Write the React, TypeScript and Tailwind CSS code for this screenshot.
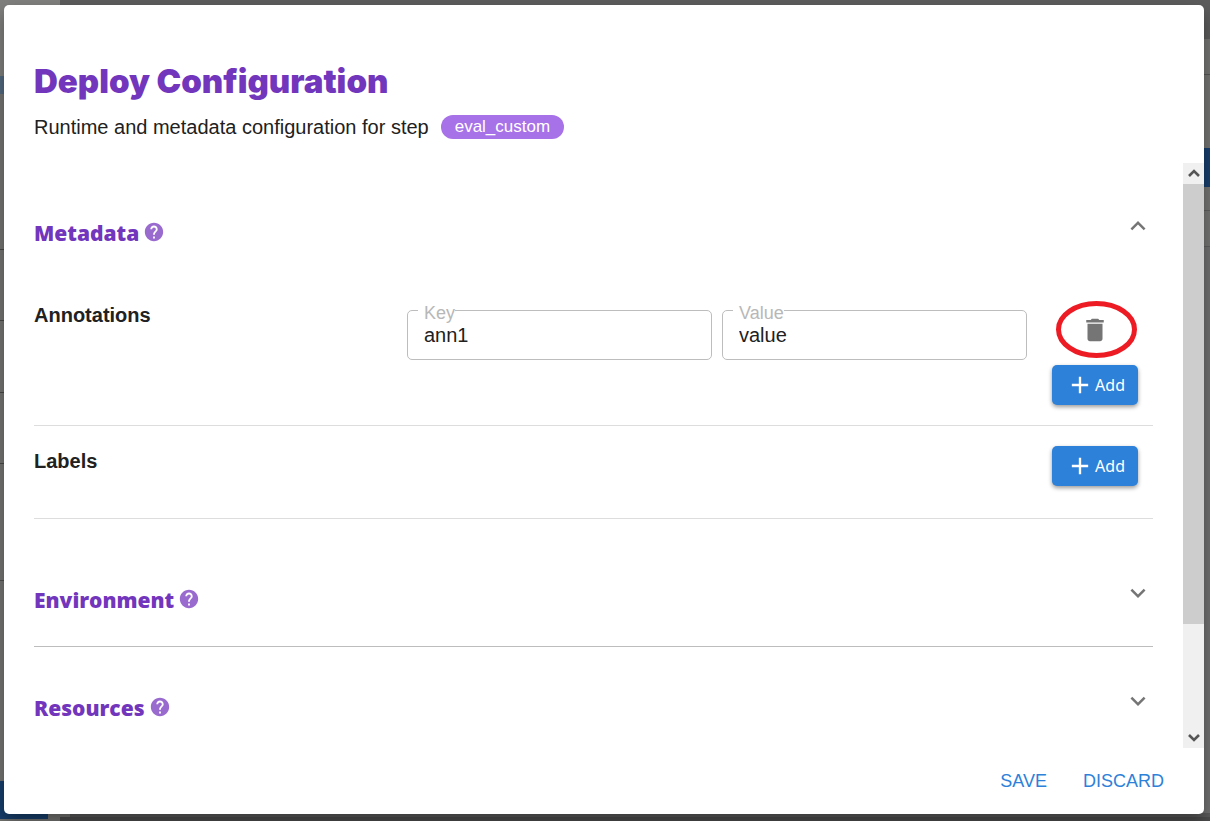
import React from 'react';
import { MdAdd, MdDelete, MdExpandLess, MdExpandMore, MdHelp } from 'react-icons/md';

type SectionHeaderProps = {
    title: string;
    open?: boolean;
};

const SectionHeader: React.FC<SectionHeaderProps> = ({ title, open = false }) => {
    const Chevron = open ? MdExpandLess : MdExpandMore;
    return (
        <div className="flex items-start justify-between">
            <div className="flex items-start gap-1">
                <h2 className="pt-2 font-['Open_Sans',sans-serif] text-[21px] leading-7 font-extrabold text-[#7236bd]">
                    {title}
                </h2>
                <button type="button" aria-label={`${title} help`} className="pt-2.5 text-[#9a6bcf]">
                    <MdHelp className="h-[22px] w-[22px]" />
                </button>
            </div>
            <button type="button" aria-label={`Toggle ${title}`} aria-expanded={open} className="text-[#757575]">
                <Chevron className="h-[30px] w-[30px]" />
            </button>
        </div>
    );
};

type TextFieldProps = {
    id: string;
    label: string;
    value: string;
};

const TextField: React.FC<TextFieldProps> = ({ id, label, value }) => (
    <div className="relative flex-1">
        <input
            id={id}
            type="text"
            defaultValue={value}
            className="h-[50px] w-full rounded-[5px] border border-[#bdbdbd] px-4 text-xl text-[#212121] outline-none"
        />
        <label htmlFor={id} className="absolute -top-[7px] left-[11px] bg-white pl-1.5 text-lg leading-5 text-[#b8b8b8]">
            {label}
        </label>
    </div>
);

const AddButton: React.FC = () => (
    <button
        type="button"
        className="flex h-10 w-[86px] items-center justify-end gap-px rounded-[5px] bg-[#2d81d9] pr-[13px] pb-px font-['Noto_Sans',sans-serif] text-base text-white shadow-[0_2px_4px_rgba(0,0,0,0.4)]"
    >
        <MdAdd className="h-7 w-7" />
        Add
    </button>
);

// Page that stays dimmed behind the dialog
const Backdrop: React.FC = () => (
    <div aria-hidden="true" className="flex h-full bg-[#747472]">
        <div className="flex w-[60px] flex-col">
            <div className="h-[76px] bg-[#7f7f7e]" />
            <div className="h-[18px] bg-[#52697f]" />
            <div className="h-[156px] border-b border-[#484848]" />
            <div className="h-[71px] border-b border-[#484848]" />
            <div className="h-[72px] border-b border-[#484848]" />
            <div className="h-[71px] border-b border-[#484848]" />
            <div className="h-[117px] border-b border-[#505050]" />
            <div className="flex-1" />
            <div className="mb-0.5 h-[38px] w-12 bg-[#173f6c]" />
        </div>
        <div className="flex flex-1 flex-col">
            <div className="h-[39px] bg-[#5c5c5c]" />
            <div className="h-9 border-b border-[#555555]" />
            <div className="h-[73px]" />
            <div className="h-[39px] bg-[#173f6c]" />
            <div className="h-6 border-b border-[#5f5f5f]" />
            <div className="h-9 border-b border-[#5f5f5f]" />
            <div className="flex-1 bg-[#707070]" />
            <div className="ml-2.5 h-1 bg-[#5a5a5a]" />
            <div className="h-1 bg-[#4c4c4c]" />
        </div>
    </div>
);

const ScrollBar: React.FC = () => (
    <div className="flex w-[21px] shrink-0 flex-col bg-[#f0f0f0] text-[#555555]">
        <button type="button" aria-label="Scroll up" className="flex h-[21px] items-center justify-center">
            <svg viewBox="0 0 12 9" className="h-[9px] w-3" fill="none" stroke="currentColor" strokeWidth="2.6">
                <path d="M1 7 6 2l5 5" />
            </svg>
        </button>
        <div className="flex flex-1 flex-col">
            <div className="h-[81%] bg-[#cdcdcd]" />
        </div>
        <button type="button" aria-label="Scroll down" className="flex h-[21px] items-center justify-center">
            <svg viewBox="0 0 12 9" className="h-[9px] w-3" fill="none" stroke="currentColor" strokeWidth="2.6">
                <path d="M1 2l5 5 5-5" />
            </svg>
        </button>
    </div>
);

const App: React.FC = () => {
    return (
        <div className="relative h-screen overflow-hidden font-['Liberation_Sans',Arial,sans-serif]">
            <Backdrop />
            <div className="absolute inset-0 pt-[5px] pr-1.5 pb-[7px] pl-1">
                <div
                    role="dialog"
                    aria-labelledby="dialog-title"
                    className="flex h-full flex-col rounded-[5px] bg-white text-[#212121] shadow-[0_8px_16px_rgba(0,0,0,0.35)]"
                >
                    <header className="px-[30px] pt-14 pb-5">
                        <h1
                            id="dialog-title"
                            className="font-['Inter',sans-serif] text-[33px] leading-10 font-black text-[#7236bd]"
                        >
                            Deploy Configuration
                        </h1>
                        <p className="flex items-center gap-3 pt-2.5 text-xl leading-8">
                            Runtime and metadata configuration for step
                            <span className="rounded-full bg-[#a771e8] px-3.5 text-[17px] leading-6 text-white">
                                eval_custom
                            </span>
                        </p>
                    </header>

                    <div className="flex min-h-0 flex-1">
                        <main className="min-w-0 flex-1 overflow-y-auto pr-[30px] pl-[30px] [scrollbar-width:none]">
                            <section className="pt-12">
                                <div className="h-[99px]">
                                    <SectionHeader title="Metadata" open />
                                </div>
                                <div className="flex border-b border-[#dddddd] pb-5">
                                    <h3 className="w-1/3 text-xl leading-[10px] font-bold">Annotations</h3>
                                    <div className="flex flex-1 gap-2.5">
                                        <TextField id="annotation-key" label="Key" value="ann1" />
                                        <TextField id="annotation-value" label="Value" value="value" />
                                    </div>
                                    <div className="flex w-[126px] flex-col items-end gap-5 pr-[15px]">
                                        <div className="relative flex w-[86px] justify-center pt-[5px]">
                                            <button type="button" aria-label="Delete annotation" className="text-[#757575]">
                                                <MdDelete className="h-[30px] w-[30px]" />
                                            </button>
                                            <svg
                                                viewBox="0 0 82 58"
                                                className="pointer-events-none absolute -top-2.5 left-1 h-[58px] w-[82px]"
                                                fill="none"
                                                stroke="#ed1c24"
                                                strokeWidth="5"
                                            >
                                                <ellipse cx="40.5" cy="29.5" rx="38" ry="26" />
                                            </svg>
                                        </div>
                                        <AddButton />
                                    </div>
                                </div>
                                <div className="flex justify-between border-b border-[#dddddd] pt-5 pr-[15px] pb-8">
                                    <h3 className="text-xl leading-[30px] font-bold">Labels</h3>
                                    <AddButton />
                                </div>
                            </section>
                            <section className="border-b border-[#bdbdbd] pt-[59px] pb-8">
                                <SectionHeader title="Environment" />
                            </section>
                            <section className="pt-[39px] pb-8">
                                <SectionHeader title="Resources" />
                            </section>
                        </main>
                        <ScrollBar />
                    </div>

                    <footer className="flex h-[66px] items-center justify-end gap-9 pr-10 text-lg text-[#2d81d9]">
                        <button type="button">SAVE</button>
                        <button type="button">DISCARD</button>
                    </footer>
                </div>
            </div>
        </div>
    );
};

export default App;
